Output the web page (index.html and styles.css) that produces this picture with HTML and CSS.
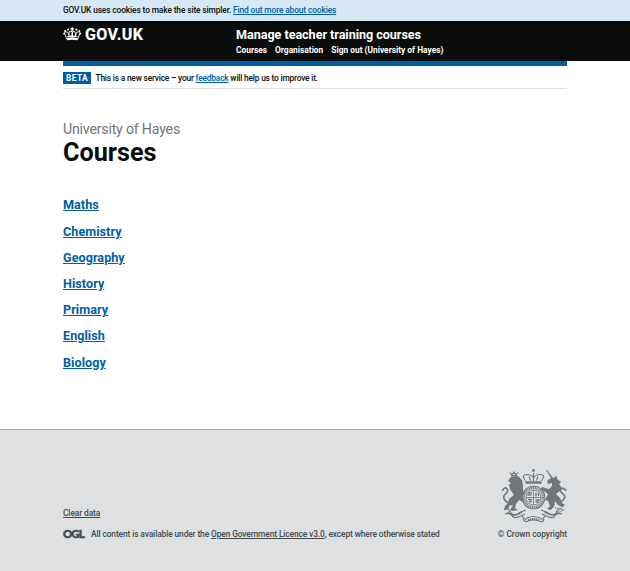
FILE: index.html
```html
<!DOCTYPE html>
<html lang="en">
<head>
<meta charset="utf-8">
<title>Courses</title>
<link rel="stylesheet" href="styles.css">
</head>
<body>
<div class="cookie-banner"><p class="container">GOV.UK uses cookies to make the site simpler. <a href="#">Find out more about cookies</a></p></div>
<header class="header">
  <div class="container header-row">
    <a class="brand" href="#">
      <svg class="crown" viewBox="0 0 38 28" aria-hidden="true">
        <g fill="none" stroke="currentColor" stroke-width="2.4">
          <path d="M7 23 3.500 13Q2 9 6 9.500 12 10 12.500 20M31 23 34.500 13Q36 9 32 9.500 26 10 25.500 20M12.500 20Q11 8 17 8.500 19 9 19 20 19 9 21 8.500 27 8 25.500 20" stroke-dasharray="2.600 .7"/>
          <path d="M14 18h10M19 12v9M8 19h22" stroke-width="1.800"/>
        </g>
        <path fill="currentColor" d="M7 22Q19 19 31 22L30 27Q19 25 8 27ZM17.700 0h2.600v2H23v2.500h-2.700V8h-2.600V4.500H15V2h2.700Z"/>
        <g fill="currentColor"><circle cx="2" cy="13" r="1.800"/><circle cx="4.500" cy="8" r="2"/><circle cx="10.500" cy="5" r="2.100"/><circle cx="27.500" cy="5" r="2.100"/><circle cx="33.500" cy="8" r="2"/><circle cx="36" cy="13" r="1.800"/></g>
      </svg>
      <span class="brand-name">GOV.UK</span>
    </a>
    <div>
      <a class="service" href="#">Manage teacher training courses</a>
      <nav class="nav"><a href="#">Courses</a><a href="#">Organisation</a><a href="#">Sign out (University of Hayes)</a></nav>
    </div>
  </div>
</header>
<div class="container">
  <div class="phase"><strong class="tag">BETA</strong><span class="phase-text">This is a new service – your <a href="#">feedback</a> will help us to improve it.</span></div>
  <main>
    <p class="caption">University of Hayes</p>
    <h1>Courses</h1>
    <ul class="courses">
      <li><a href="#">Maths</a></li>
      <li><a href="#">Chemistry</a></li>
      <li><a href="#">Geography</a></li>
      <li><a href="#">History</a></li>
      <li><a href="#">Primary</a></li>
      <li><a href="#">English</a></li>
      <li><a href="#">Biology</a></li>
    </ul>
  </main>
</div>
<footer class="footer">
  <div class="container footer-row">
    <div>
      <a class="clear" href="#">Clear data</a>
      <p class="licence"><span class="ogl">OGL</span><span class="licence-text">All content is available under the <a href="#">Open Government Licence v3.0</a>, except where otherwise stated</span></p>
    </div>
    <a class="copyright" href="#">
      <svg class="arms" viewBox="0 0 66 54" aria-hidden="true">
        <g fill="none" stroke="currentColor">
          <path d="M24.500 12Q20 6 25 5.500 30 5 32.500 9 35 5 40 5.500 45 6 40.500 12M32.500 4v8M28 7.500l1.500 4M37 7.500 35.500 11.500" stroke-width="1.100"/>
          <path d="M24.500 13.500h16" stroke-width="2.400"/>
          <circle cx="32.500" cy="28.500" r="11.300" stroke-width="1.100"/>
          <circle cx="32.500" cy="28.500" r="9.500" stroke-width="2" stroke-dasharray="1.200 .7"/>
          <circle cx="32.500" cy="28.500" r="7.500" stroke-width=".9"/>
          <path d="M32.500 21v15M25 28.500h15" stroke-width=".8"/>
          <path d="M27 24h4M26.500 26h4M35 23.500v4M37.500 24v3M27 30.500h4M28 32.500h3M34.500 31h4M34.500 33h3" stroke-width="1.300"/>
          <path d="M7 34Q0 29 4.500 25 8 22 6 20 4 17 1 22M58 34Q67 29 62 25 58 22 60 20 63 18 65 22" stroke-width="1.600"/>
          <path d="M3 41Q8 38 10 44 12 48 20 43L25 41M62 41Q57 38 55 44 53 48 45 43L40 41M4 45Q10 43 12 48 15 50 24 45M61 45Q55 43 53 48 50 50 41 45" stroke-width="1.200"/>
          <path d="M7 43Q12 49 21 43M44 43Q53 49 58 43" stroke-width="2.200" stroke-dasharray="1.200 .8"/>
          <path d="M21 47Q24 52 26 49 32 46 39 49 41 52 44 47M22 50Q24 54 27 52 32 50 38 52 42 54 43 50" stroke-width="1.200"/>
          <path d="M27 51Q32 49 38 51" stroke-width="2" stroke-dasharray="1.300 .7"/>
          <path d="M54 35Q50 38 55 39 60 40 63 37M57 42Q60 44 64 40" stroke-width=".9" stroke-dasharray="1.200 .6"/>
          <path d="M9 3.500 11 6 13 3 15 6 17 3.500M10 6.500h6" stroke-width="1.200"/>
        </g>
        <g fill="currentColor">
          <circle cx="32.500" cy="1.500" r="1.400"/>
          <path d="M10 7.500 17 7 21 11 22 17 22 22 24 24 21 28 23 32 22 33 18 31 15 35 14 39 17 41 11 42 9 40 12 37 9 36 7 40 3 41 4 37 7 34 8 30 13 26 11 23 9 20 8 16 10 14 7 12Z"/>
          <path d="M46 1 52 9 56 7 56 10 60 13 58 15 61 19 59 22 55 25 59 29 61 34 64 36 61 38 57 36 54 32 53 37 50 41 46 40 49 37 47 32 44 31 47 25 40 20 41 18 48 20 51 17 51 14 47 15 46 12 50 9 45 1Z"/>
        </g>
      </svg>
      <span class="copyright-text">© Crown copyright</span>
    </a>
  </div>
</footer>
</body>
</html>
```

FILE: styles.css
```css
* { box-sizing: border-box; }
body { margin: 0; background: #fff; color: #0b0c0c; font: 500 8.4px/12px Roboto, "Liberation Sans", sans-serif; white-space: nowrap; }
p, h1, ul { margin: 0; padding: 0; }
a { color: #005ea5; }
.container { width: 504px; margin: 0 auto; }
.cookie-banner { height: 21px; padding-top: 4px; background: #d5e8f3; letter-spacing: -.13px; }
.header { height: 40px; background: #0b0c0c; color: #fff; }
.header a { color: #fff; text-decoration: none; font-weight: 700; }
.header-row { display: grid; grid-template-columns: 173px 1fr; }
.brand { display: flex; padding-top: 6px; gap: 3.500px; }
.crown { width: 18.500px; height: 14px; }
.brand-name { font-size: 16px; line-height: 16px; letter-spacing: .4px; -webkit-text-stroke: .2px currentColor; }
.service { display: block; padding-top: 5px; font-size: 12.6px; line-height: 17px; letter-spacing: -.04px; }
.nav { display: flex; gap: 8px; line-height: 14px; }
.phase { display: flex; align-items: center; height: 28px; padding-top: 3px; padding-bottom: 2px; border-top: 5px solid #005ea5; border-bottom: 1px solid #dee0e2; }
.phase-text { letter-spacing: -.2px; }
.tag { width: 28px; height: 12px; margin-right: 4.500px; background: #005ea5; color: #fff; text-align: center; line-height: 12px; letter-spacing: .4px; }
.caption { margin-top: 31px; color: #6f777b; font-size: 14.2px; font-weight: 400; line-height: 18px; letter-spacing: -.21px; }
h1 { padding-top: 1px; font-size: 25.2px; line-height: 27px; }
.courses { margin-top: 31.400px; list-style: none; font-size: 12.6px; font-weight: 700; letter-spacing: .05px; }
.courses li { height: 26.200px; line-height: 16px; }
.footer { height: 142px; margin-top: 48.200px; border-top: 1px solid #a1acb2; background: #dee0e2; color: #454a4c; }
.footer a { color: inherit; }
.footer-row { display: flex; justify-content: space-between; align-items: flex-end; padding-top: 39px; }
.clear { display: block; margin-bottom: 9px; letter-spacing: -.1px; }
.licence { display: flex; align-items: center; }
.licence-text { letter-spacing: -.11px; }
.ogl { width: 28px; font: 900 11.5px/12px Lato, Roboto, sans-serif; letter-spacing: -1px; -webkit-text-stroke: .5px currentColor; }
.footer .copyright { display: flex; flex-direction: column; align-items: flex-end; text-decoration: none; }
.arms { width: 66px; height: 54px; margin-bottom: 5px; color: #6f777b; }
.copyright-text { letter-spacing: -.04px; }
```
